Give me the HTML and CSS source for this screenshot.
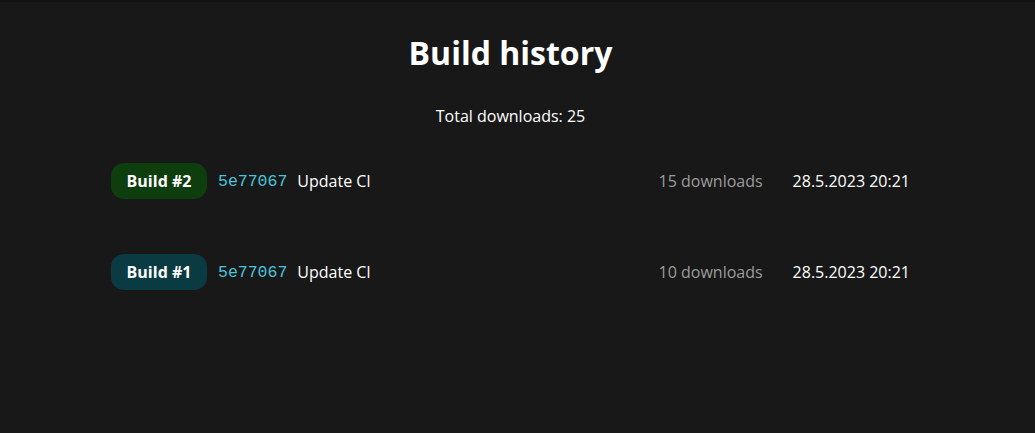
FILE: index.html
```html
<!DOCTYPE html>
<html>
<head>
<meta charset="utf-8">
<link rel="stylesheet" href="styles.css">
</head>
<body>
<main class="page">
  <h1 class="title">Build history</h1>
  <p class="total">Total downloads: 25</p>
  <ul class="builds">
    <li class="build">
      <span class="badge badge-green">Build #2</span>
      <code class="hash">5e77067</code>
      <span class="msg">Update CI</span>
      <span class="downloads">15 downloads</span>
      <span class="date">28.5.2023 20:21</span>
    </li>
    <li class="build">
      <span class="badge badge-teal">Build #1</span>
      <code class="hash">5e77067</code>
      <span class="msg">Update CI</span>
      <span class="downloads">10 downloads</span>
      <span class="date">28.5.2023 20:21</span>
    </li>
  </ul>
</main>
</body>
</html>
```
FILE: styles.css
```css
html, body {
  margin: 0;
  padding: 0;
  background: #181818;
  height: 100%;
}
body {
  border-top: 2px solid #111111;
  box-sizing: border-box;
  color: #ffffff;
  font-family: "Open Sans", "Noto Sans", "Liberation Sans", sans-serif;
}
.page {
  padding: 0 125px 0 111px;
}
.title {
  margin: 0;
  padding-top: 29px;
  text-align: center;
  font-size: 32px;
  font-weight: 700;
  line-height: 44px;
}
.total {
  margin: 30px 0 0;
  text-align: center;
  font-size: 16px;
  line-height: 22px;
}
.builds {
  list-style: none;
  margin: 36px 0 0;
  padding: 0;
  display: flex;
  flex-direction: column;
  gap: 55px;
}
.build {
  display: flex;
  align-items: center;
  height: 36px;
  font-size: 16px;
}
.badge {
  width: 96px;
  height: 36px;
  border-radius: 13px;
  display: flex;
  align-items: center;
  justify-content: center;
  font-weight: 700;
  font-size: 16px;
}
.badge-green { background: #0e3d0e; }
.badge-teal { background: #0a3b42; }
.hash {
  margin-left: 11px;
  font-family: "Liberation Mono", "DejaVu Sans Mono", monospace;
  font-size: 16.5px;
  color: #4cc3dc;
}
.msg {
  margin-left: 10px;
  flex: 1;
}
.downloads {
  color: #9c9c9c;
}
.date {
  margin-left: 30px;
}
```
